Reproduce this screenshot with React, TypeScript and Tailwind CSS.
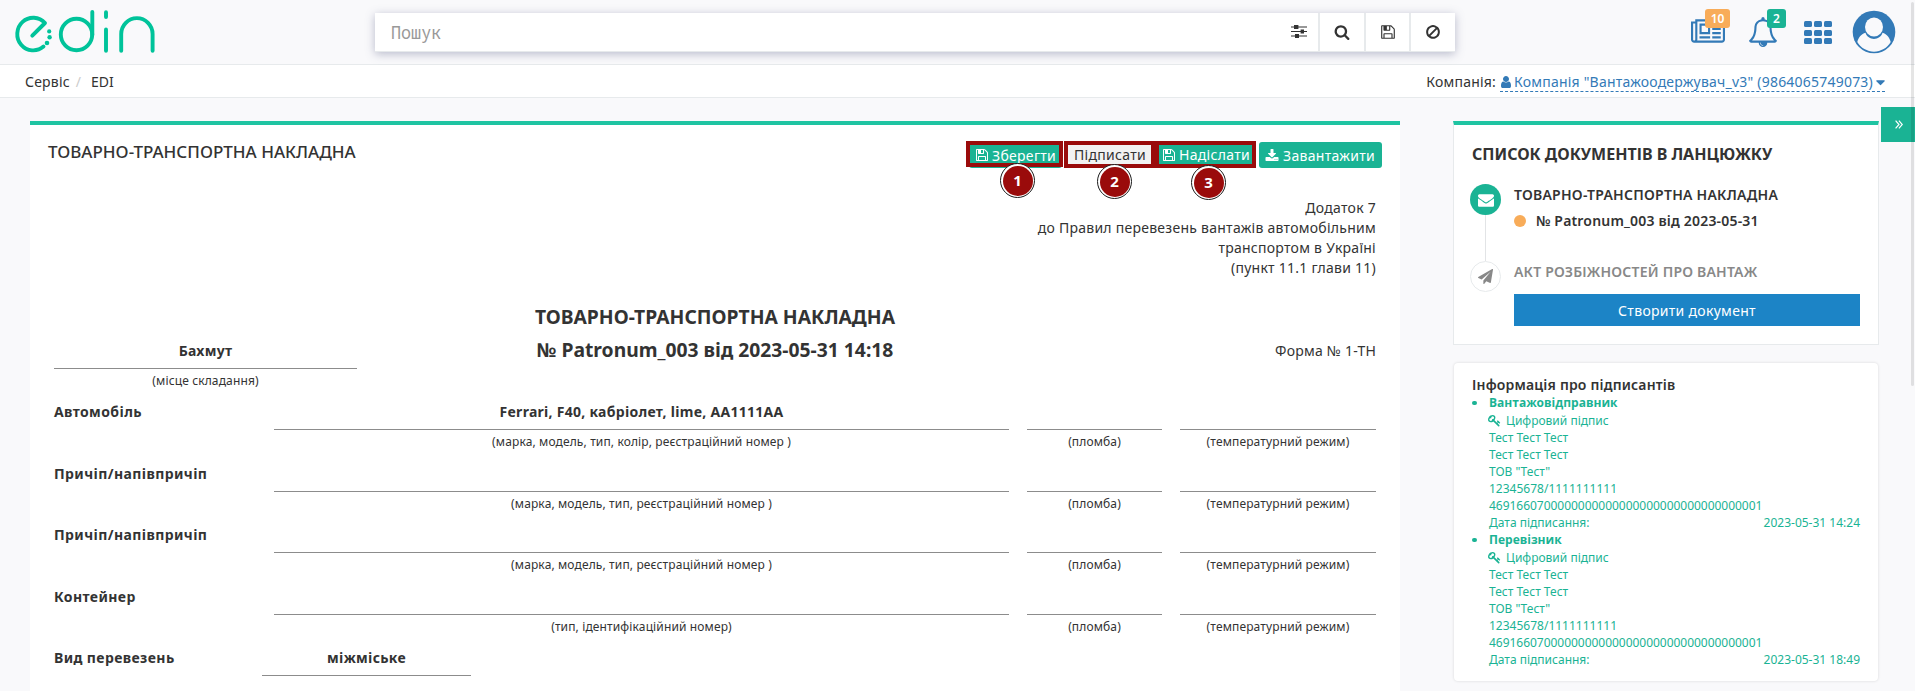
import React, { ReactNode } from "react";

const ICONS = {
  search: "M1216 832q0-185-131.5-316.5t-316.5-131.5-316.5 131.5-131.5 316.5 131.5 316.5 316.5 131.5 316.5-131.5 131.5-316.5zm512 832q0 52-38 90t-90 38q-54 0-90-38l-343-342q-179 124-399 124-143 0-273.5-55.5t-225-150-150-225-55.5-273.5 55.5-273.5 150-225 225-150 273.5-55.5 273.5 55.5 225 150 150 225 55.5 273.5q0 220-124 399l343 343q37 37 37 90z",
  save: "M512 1536h768v-384h-768v384zm896 0h128v-896q0-14-10-38.5t-20-34.5l-281-281q-10-10-34-20t-39-10v416q0 40-28 68t-68 28h-576q-40 0-68-28t-28-68v-416h-128v1280h128v-416q0-40 28-68t68-28h832q40 0 68 28t28 68v416zm-384-928v-320q0-13-9.5-22.5t-22.5-9.5h-192q-13 0-22.5 9.5t-9.5 22.5v320q0 13 9.5 22.5t22.5 9.5h192q13 0 22.5-9.5t9.5-22.5zm640 32v928q0 40-28 68t-68 28h-1344q-40 0-68-28t-28-68v-1344q0-40 28-68t68-28h928q40 0 88 20t76 48l280 280q28 28 48 76t20 88z",
  ban: "M1440 893q0-161-87-295l-754 753q137 89 297 89 111 0 211.5-43.5t173.5-116.5 116-174.5 43-212.5zm-999 299l755-754q-135-91-300-91-148 0-273 73t-198 199-73 274q0 162 89 299zm1223-299q0 157-61 300t-163.5 246-245 164-298.5 61-298.5-61-245-164-163.5-246-61-300 61-299.5 163.5-245.5 245-164 298.5-61 298.5 61 245 164 163.5 245.5 61 299.5z",
  download: "M1344 1344q0-26-19-45t-45-19-45 19-19 45 19 45 45 19 45-19 19-45zm256 0q0-26-19-45t-45-19-45 19-19 45 19 45 45 19 45-19 19-45zm128-224v320q0 40-28 68t-68 28h-1472q-40 0-68-28t-28-68v-320q0-40 28-68t68-28h465l135 136q58 56 136 56t136-56l136-136h464q40 0 68 28t28 68zm-325-569q17 41-14 70l-448 448q-18 19-45 19t-45-19l-448-448q-31-29-14-70 17-39 59-39h256v-448q0-26 19-45t45-19h256q26 0 45 19t19 45v448h256q42 0 59 39z",
  envelope: "M1792 710v794q0 66-47 113t-113 47h-1472q-66 0-113-47t-47-113v-794q44 49 101 87 362 246 497 345 57 42 92.5 65.5t94.5 48 110 24.5h2q51 0 110-24.5t94.5-48 92.5-65.5q170-123 498-345 57-39 100-87zm0-294q0 79-49 151t-122 123q-376 261-468 325-10 7-42.5 31t-54 38.5-52 32.5-57.5 27-50 9h-2q-23 0-50-9t-57.5-27-52-32.5-54-38.5-42.5-31q-91-64-262-182.5t-205-142.5q-62-42-117-115.5t-55-136.5q0-78 41.5-130t118.5-52h1472q65 0 112.5 47t47.5 113z",
  plane: "M1764 11q33 24 27 64l-256 1536q-5 29-32 45-14 8-31 8-11 0-24-5l-453-185-242 295q-18 23-49 23-13 0-22-4-19-7-30.5-23.5t-11.5-36.5v-349l864-1059-1069 925-395-162q-37-14-40-55-2-40 32-59l1664-960q15-9 32-9 20 0 36 11z",
  caret: "M1408 704q0 26-19 45l-448 448q-19 19-45 19t-45-19l-448-448q-19-19-19-45t19-45 45-19h896q26 0 45 19t19 45z",
  user: "M1536 1399q0 109-62.5 187t-150.5 78h-854q-88 0-150.5-78t-62.5-187q0-85 8.5-160.5t31.5-152 58.5-131 94-89 134.5-34.5q131 128 313 128t313-128q76 0 134.5 34.5t94 89 58.5 131 31.5 152 8.5 160.5zm-256-887q0 159-112.5 271.5t-271.5 112.5-271.5-112.5-112.5-271.5 112.5-271.5 271.5-112.5 271.5 112.5 112.5 271.5z",
  news: "M1024 512h-384v384h384v-384zm128 640v128h-640v-128h640zm0-768v640h-640v-640h640zm640 768v128h-512v-128h512zm0-256v128h-512v-128h512zm0-256v128h-512v-128h512zm0-256v128h-512v-128h512zm-1536 960v-960h-128v960q0 26 19 45t45 19 45-19 19-45zm1664 0v-1088h-1536v1088q0 33-11 64h1483q26 0 45-19t19-45zm128-1216v1216q0 80-56 136t-136 56h-1664q-80 0-136-56t-56-136v-1088h256v-128h1792z",
  bell: "M912 1696q0-16-16-16-59 0-101.5-42.5t-42.5-101.5q0-16-16-16t-16 16q0 73 51.5 124.5t124.5 51.5q16 0 16-16zm-666-288h1300q-266-300-266-832 0-51-24-105t-69-103-121.5-80.5-169.5-31.5-169.5 31.5-121.5 80.5-69 103-24 105q0 532-266 832zm1482 0q0 52-38 90t-90 38h-448q0 106-75 181t-181 75-181-75-75-181h-448q-52 0-90-38t-38-90q50-42 91-88t85-119.5 74.5-158.5 50-206 19.5-260q0-152 117-282.5t307-158.5q-8-19-8-39 0-40 28-68t68-28 68 28 28 68q0 20-8 39 190 28 307 158.5t117 282.5q0 139 19.5 260t50 206 74.5 158.5 85 119.5 91 88z",
  key: "M832 512q0-80-56-136t-136-56-136 56-56 136q0 42 19 83-41-19-83-19-80 0-136 56t-56 136 56 136 136 56 136-56 56-136q0-42-19-83 41 19 83 19 80 0 136-56t56-136zm851 704q0 17-49 66t-66 49q-9 0-28.5-16t-36.5-33-38.5-40-24.5-26l-96 96 220 220q28 28 28 68 0 42-39 81t-81 39q-40 0-68-28l-671-671q-176 131-365 131-163 0-265.5-102.5t-102.5-265.5q0-160 95-313t248-248 313-95q163 0 265.5 102.5t102.5 265.5q0 189-131 365l355 355 96-96q-3-3-26-24.5t-40-38.5-33-36.5-16-28.5q0-17 49-66t66-49q13 0 23 10 6 6 46 44.5t82 79.5 86.5 86 73 78 28.5 41z",
};

function Icon({ name, className = "", box = "0 0 1792 1792" }: { name: keyof typeof ICONS; className?: string; box?: string }) {
  return (
    <svg viewBox={box} fill="currentColor" className={`shrink-0 ${className}`}>
      <path d={ICONS[name]} />
    </svg>
  );
}

function Logo() {
  return (
    <svg viewBox="0 0 170 64" className="h-16 w-[170px] shrink-0" fill="none" stroke="#00c39a" strokeWidth="3.9" strokeLinecap="round" strokeLinejoin="round">
      <path d="M32.3 35.6 45 23A16 16.3 0 1 0 43.5 46.6" />
      <circle cx="76.5" cy="34.5" r="15.7" />
      <path d="M92.3 12V35" />
      <path d="M106 12.2V17M106 29.5V50.8" />
      <path d="M121.2 50.8V34a15.7 15.9 0 0 1 31.4 0V50.8" />
      <g fill="#00c39a" stroke="none">
        <circle cx="49.2" cy="31.4" r="2.1" />
        <circle cx="49.6" cy="37.3" r="2.2" />
        <circle cx="47" cy="43" r="2.3" />
      </g>
    </svg>
  );
}

function Header() {
  return (
    <header className="flex h-[65px] items-start border-b border-[#e7eaec]">
      <div className="w-[375px]">
        <Logo />
      </div>
      <div className="mt-[13px] flex h-[39px] w-[1080px] border-b border-[#e7eaec] bg-white text-[#333] shadow-[0_2px_9px_rgba(80,85,125,0.38)]">
        <div className="flex flex-1 items-center pl-[16px]">
          <span className="origin-left scale-x-[0.93] font-['Noto_Sans_Mono',monospace] text-[18px] leading-none text-[#999]">Пошук</span>
        </div>
        <svg viewBox="0 0 16 14" className="mt-[12px] mr-[11px] h-[14px] w-[16px]" fill="currentColor">
          <path d="M0 1.4h16v1.2H0zM0 5.9h16v1.2H0zM0 10.4h16v1.2H0z" />
          <path d="M3 0h4.4v4H3zM9.6 4.5H13v4H9.600zM4 9h4v4H4z" />
        </svg>
        <div className="flex w-[46px] items-center justify-center border-l-2 border-[#e7eaec]">
          <Icon name="search" className="size-4" />
        </div>
        <div className="flex w-[45px] items-center justify-center border-l-2 border-[#e7eaec]">
          <Icon name="save" className="size-4" />
        </div>
        <div className="flex w-[46px] items-center justify-center border-l-2 border-[#e7eaec]">
          <Icon name="ban" className="size-4" />
        </div>
      </div>
      <div className="flex flex-1 items-start text-[#337ab7]">
        <div className="relative mt-[17px] ml-[236px] w-[35px]">
          <Icon name="news" box="0 0 2048 1792" className="h-[30px] w-[34px]" />
          <span className="absolute -top-2 left-[14px] flex h-[19px] w-[25px] items-center justify-center rounded-[3px] bg-[#f8ac59] text-[12px] font-semibold text-white">10</span>
        </div>
        <div className="relative mt-[17px] ml-[22px] w-[30px]">
          <Icon name="bell" className="size-[30px]" />
          <span className="absolute -top-2 left-[19px] flex h-[19px] w-[19px] items-center justify-center rounded-[3px] bg-[#1ab394] text-[12px] font-semibold text-white">2</span>
        </div>
        <div className="mt-[21px] ml-[26px] grid w-[28px] grid-cols-3 gap-x-[2px] gap-y-[2.500px]">
          {Array.from({ length: 9 }, (_, i) => (
            <i key={i} className="h-[6px] rounded-[1.500px] bg-[#337ab7]" />
          ))}
        </div>
        <svg viewBox="0 0 44 44" className="mt-[10px] ml-[20px] size-[44px]">
          <circle cx="22" cy="22" r="21.300" fill="#337ab7" />
          <path d="M5.300 32C6.500 27.500 9.500 23.800 13.500 22.800C16 31 28 31 30.500 22.800C34.500 23.800 37.500 27.500 38.700 32A19.300 19.300 0 0 1 5.300 32Z" fill="#f9f9fb" />
          <ellipse cx="22" cy="17" rx="9" ry="9.500" fill="#f9f9fb" />
        </svg>
      </div>
    </header>
  );
}

function Breadcrumbs() {
  return (
    <nav className="flex h-[33px] justify-between border-b border-[#e7eaec] bg-white pr-[30px] pl-[25px] text-[14px] leading-[33px]">
      <div className="flex">
        <span className="tracking-[0.2px]">Сервіс</span>
        <span className="ml-[6px] text-[#ccc]">/</span>
        <span className="ml-[10px]">EDI</span>
      </div>
      <div className="flex">
        <span className="mr-[4px] tracking-[0.2px]">Компанія:</span>
        <span className="flex h-[27px] items-center border-b border-dashed border-[#337ab7] text-[#337ab7]">
          <Icon name="user" className="mt-[7px] mr-[1px] -ml-[1px] size-[14px]" />
          <span className="mt-[6px] tracking-[0.215px]">Компанія "Вантажоодержувач_v3" (9864065749073)</span>
          <Icon name="caret" className="mt-[8px] -mr-[3px] size-[15px]" />
        </span>
      </div>
    </nav>
  );
}

function Marker({ n, className }: { n: number; className: string }) {
  return (
    <span className={`absolute flex size-[35px] items-center justify-center rounded-full border-[1.500px] border-[#1c1c1c] bg-white p-[1.500px] ${className}`}>
      <span className="flex size-full items-center justify-center rounded-full bg-[#9a0b0b] text-[15px] font-bold text-white">{n}</span>
    </span>
  );
}

function Toolbar() {
  return (
    <div className="flex items-start text-[14px] text-white">
      <div className="relative h-[27px] w-[97px]">
        <div className="mt-px ml-[3px] flex h-[26px] w-[93px] items-center rounded-[3px] bg-[#1ab394] pl-[6px]">
          <Icon name="save" className="mr-[3px] size-[14px]" />
          <span className="tracking-[0.3px]">Зберегти</span>
        </div>
        <div className="absolute top-0 left-0 h-[26px] w-[97px] border-4 border-[#9a0b0b]" />
        <Marker n={1} className="top-[22px] left-[34px]" />
      </div>
      <div className="relative ml-px flex h-[27px] w-[91px] items-center border-4 border-[#9a0b0b] bg-[#f2f2f2] pl-[6px] text-[#333]">
        <span className="tracking-[0.3px]">Підписати</span>
        <Marker n={2} className="top-[19px] left-[29px]" />
      </div>
      <div className="relative flex h-[27px] w-[101px] items-center border-4 border-[#9a0b0b] bg-[#1ab394] pl-[3px]">
        <Icon name="save" className="mr-[3px] size-[14px]" />
        <span className="tracking-[0.3px]">Надіслати</span>
        <Marker n={3} className="top-[20px] left-[32px]" />
      </div>
      <div className="mt-px ml-[3px] flex h-[26px] w-[123px] items-center rounded-[3px] bg-[#1ab394] pl-[6px]">
        <Icon name="download" box="0 0 1792 1664" className="mr-[4px] h-[13px] w-[14px]" />
        <span className="tracking-[0.3px]">Завантажити</span>
      </div>
    </div>
  );
}

function Field({ value, caption, className = "" }: { value?: string; caption?: string; className?: string }) {
  return (
    <div className={`text-center ${className}`}>
      <div className="h-[31px] border-b border-[#8c8c8c] text-[14px] leading-[26px] font-bold tracking-[0.28px]">{value}</div>
      <div className="text-[12px] leading-[23px] tracking-[0.130px]">{caption}</div>
    </div>
  );
}

const VEHICLES = [
  { label: "Автомобіль", value: "Ferrari, F40, кабріолет, lime, АА1111АА", caption: "(марка, модель, тип, колір, реєстраційний номер )", h: "h-[62px]" },
  { label: "Причіп/напівпричіп", caption: "(марка, модель, тип, реєстраційний номер )", h: "h-[61px]" },
  { label: "Причіп/напівпричіп", caption: "(марка, модель, тип, реєстраційний номер )", h: "h-[62px]" },
  { label: "Контейнер", caption: "(тип, ідентифікаційний номер)", h: "h-[61px]" },
];

function Label({ children }: { children: ReactNode }) {
  return <div className="text-[14px] leading-[26px] font-bold tracking-[0.400px]">{children}</div>;
}

function Waybill() {
  return (
    <main className="h-[640px] w-[1370px] border-t-4 border-[#1fc4a2] bg-white">
      <div className="flex h-[73px] justify-between pt-[16px] pr-[18px] pl-[18px]">
        <h1 className="text-[17px] leading-[22px] font-medium">ТОВАРНО-ТРАНСПОРТНА НАКЛАДНА</h1>
        <Toolbar />
      </div>
      <div className="px-6">
        <div className="h-[106px] text-right text-[14px] leading-[20px] tracking-[0.26px]">
          <div>Додаток 7</div>
          <div>до Правил перевезень вантажів автомобільним</div>
          <div>транспортом в Україні</div>
          <div>(пункт 11.1 глави 11)</div>
        </div>
        <div className="flex h-[95px] justify-between">
          <Field value="Бахмут" caption="(місце складання)" className="w-[303px] pt-[34px]" />
          <div className="text-center text-[19.300px] leading-[33px] font-bold">
            <div className="-mt-[4px]">ТОВАРНО-ТРАНСПОРТНА НАКЛАДНА</div>
            <div>№ Patronum_003 від 2023-05-31 14:18</div>
          </div>
          <div className="w-[303px] pt-[34px] text-right text-[14px] leading-[26px] tracking-[0.200px]">Форма № 1-ТН</div>
        </div>
        {VEHICLES.map((v, i) => (
          <div key={i} className={`flex ${v.h}`}>
            <div className="w-[220px]">
              <Label>{v.label}</Label>
            </div>
            <Field value={v.value} caption={v.caption} className="w-[735px]" />
            <Field caption="(пломба)" className="ml-[18px] w-[135px]" />
            <Field caption="(температурний режим)" className="ml-[18px] w-[196px]" />
          </div>
        ))}
        <div className="flex">
          <div className="w-[208px]">
            <Label>Вид перевезень</Label>
          </div>
          <Field value="міжміське" className="w-[209px]" />
        </div>
      </div>
    </main>
  );
}

function DocumentChain() {
  return (
    <section className="h-[224px] w-[426px] border border-t-4 border-[#e7eaec] border-t-[#1fc4a2] bg-white pl-[16px]">
      <h2 className="pt-[18px] pl-[2px] text-[16px] leading-[22px] font-bold">СПИСОК ДОКУМЕНТІВ В ЛАНЦЮЖКУ</h2>
      <div className="mt-[19px] flex">
        <div className="flex w-[44px] flex-col items-start">
          <div className="flex size-[31px] items-center justify-center rounded-full bg-[#1ab394] text-white">
            <Icon name="envelope" className="size-[16px]" />
          </div>
          <div className="ml-[15px] h-[46px] w-px bg-[#e2e4e6]" />
          <div className="flex size-[31px] items-center justify-center rounded-full border border-[#e7eaec] text-[#888]">
            <Icon name="plane" className="size-[15px]" />
          </div>
        </div>
        <div className="w-[346px] text-[14px]">
          <div className="leading-[22px] font-semibold tracking-[0.250px]">ТОВАРНО-ТРАНСПОРТНА НАКЛАДНА</div>
          <div className="mt-[4px] flex items-center leading-[22px] font-semibold tracking-[0.180px]">
            <i className="mr-[10px] size-[12px] rounded-full bg-[#f8ac59]" />№ Patronum_003 від 2023-05-31
          </div>
          <div className="mt-[29px] leading-[22px] font-semibold tracking-[0.200px] text-[#888]">АКТ РОЗБІЖНОСТЕЙ ПРО ВАНТАЖ</div>
          <button className="mt-[11px] h-[32px] w-full bg-[#1c84c6] leading-[31px] tracking-[0.300px] text-white">Створити документ</button>
        </div>
      </div>
    </section>
  );
}

function Signer({ role, date }: { role: string; date: string }) {
  return (
    <li className="flex">
      <i className="mt-[7px] mr-[12px] h-[4px] w-[5px] shrink-0 rounded-full bg-[#1ab394]" />
      <div className="flex-1 leading-[17px]">
        <div className="font-['Open_Sans',sans-serif] font-bold">{role}</div>
        <div className="flex h-[18px] items-center pt-px">
          <Icon name="key" className="mr-[5px] -ml-px size-[13px]" />
          Цифровий підпис
        </div>
        <div>Тест Тест Тест</div>
        <div>Тест Тест Тест</div>
        <div>ТОВ "Тест"</div>
        <div>12345678/1111111111</div>
        <div className="tracking-[-0.030px]">4691660700000000000000000000000000000001</div>
        <div className="flex justify-between">
          <span>Дата підписання:</span>
          <span>{date}</span>
        </div>
      </div>
    </li>
  );
}

function Signers() {
  return (
    <section className="mt-[18px] ml-px h-[318px] w-[424px] rounded-[4px] bg-white pt-[11px] pr-[18px] pl-[18px] shadow-[0_0_3px_rgba(0,0,0,0.14)]">
      <h3 className="text-[14px] leading-[21px] font-semibold tracking-[0.180px]">Інформація про підписантів</h3>
      <ul className="-mt-px text-[12px] text-[#1ab394]">
        <Signer role="Вантажовідправник" date="2023-05-31 14:24" />
        <Signer role="Перевізник" date="2023-05-31 18:49" />
      </ul>
    </section>
  );
}

export default function App() {
  return (
    <div className="relative flex h-[691px] w-[1915px] flex-col overflow-hidden bg-[#f9f9fb] font-['Noto_Sans',sans-serif] text-[#333]">
      <Header />
      <Breadcrumbs />
      <div className="flex items-start pt-[23px] pl-[30px]">
        <Waybill />
        <aside className="ml-[53px]">
          <DocumentChain />
          <Signers />
        </aside>
      </div>
      <button className="absolute top-[107px] right-0 flex h-[35px] w-[34px] items-center justify-center bg-[#1ab394] text-white">
        <svg viewBox="0 0 8 9" className="-mr-[1px] h-[9px] w-[8px]" fill="none" stroke="currentColor" strokeWidth="1.200">
          <path d="M.6.6 4 4.500.6 8.400M3.900.6 7.300 4.500 3.900 8.400" />
        </svg>
      </button>
      <div className="absolute top-[2px] right-px h-[384px] w-[3px] rounded-full bg-black/10" />
    </div>
  );
}
